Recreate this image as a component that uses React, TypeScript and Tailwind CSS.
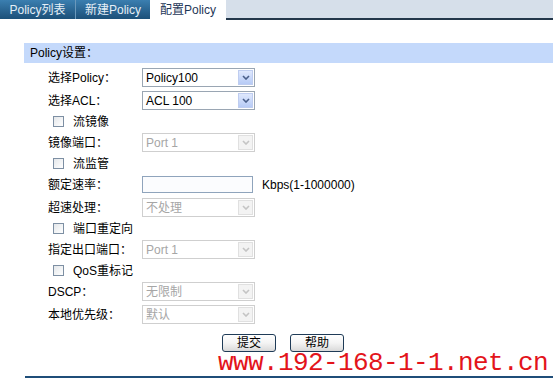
import React from "react";

const font = { fontFamily: '"Liberation Sans", Arial, "Noto Sans CJK SC", sans-serif' };

function Chevron({ disabled }: { disabled?: boolean }) {
  return (
    <svg width="8" height="5" viewBox="0 0 8 5">
      <path d="M1 1 L4 4 L7 1" fill="none" stroke={disabled ? "#c4c4c4" : "#4a5f8a"} strokeWidth="1.6" />
    </svg>
  );
}

function Select({ value, disabled }: { value: string; disabled?: boolean }) {
  return (
    <div
      className={`flex items-stretch w-[113px] h-[19px] border bg-white ${
        disabled ? "border-[#cfcfcf] text-[#a6a6a6]" : "border-[#9aa6b3] text-black"
      }`}
    >
      <div className="flex-1 flex items-center pl-[3px] text-[12px] leading-none">{value}</div>
      <div
        className={`m-[1px] w-[15px] flex items-center justify-center border ${
          disabled
            ? "bg-[#f3f3f3] border-[#e0e0e0]"
            : "bg-gradient-to-b from-[#dfe8fd] to-[#b7cbf6] border-[#bfcdf0]"
        }`}
      >
        <Chevron disabled={disabled} />
      </div>
    </div>
  );
}

function Label({ children }: { children: React.ReactNode }) {
  return <div className="w-[94px] pl-0 text-[12px] text-black">{children}</div>;
}

function SelectRow({ label, value, disabled }: { label: string; value: string; disabled?: boolean }) {
  return (
    <div className="h-[23px] flex items-center pl-[48px]">
      <Label>{label}</Label>
      <Select value={value} disabled={disabled} />
    </div>
  );
}

function CheckRow({ label }: { label: string }) {
  return (
    <div className="h-[19px] flex items-center pl-[53px]">
      <div className="w-[11px] h-[11px] border border-[#7d8fa3] bg-gradient-to-br from-[#e4e7ea] to-white" />
      <div className="ml-[9px] text-[12px] text-black">{label}</div>
    </div>
  );
}

function Button({ children }: { children: React.ReactNode }) {
  return (
    <div className="w-[54px] h-[18px] rounded-[3px] border border-[#1f3b57] bg-gradient-to-b from-white via-[#f4f4f4] to-[#d9d9d9] flex items-center justify-center text-[12px] leading-none text-black">
      {children}
    </div>
  );
}

export default function App() {
  return (
    <div className="relative w-[553px] h-[378px] overflow-hidden bg-white" style={font}>
      {/* tab bar */}
      <div className="flex h-[20px]">
        <div className="w-[76px] h-[19px] bg-gradient-to-b from-[#3b7fb0] to-[#1c5079] border-r border-[#6a98bb] flex items-center justify-center text-[12px] text-[#e6eff7]">
          Policy列表
        </div>
        <div className="w-[74px] h-[19px] bg-gradient-to-b from-[#3b7fb0] to-[#1c5079] flex items-center justify-center text-[12px] text-[#e6eff7]">
          新建Policy
        </div>
        <div className="w-[76px] h-[20px] bg-white flex items-center justify-center pb-[1px] text-[12px] text-[#1d3657]">
          配置Policy
        </div>
        <div className="flex-1 h-[20px] bg-[#d6dfea] border-b-2 border-[#23374b]" />
      </div>

      {/* section header */}
      <div className="mt-[23px] ml-[24px] h-[20px] bg-[#c4d9fb] flex items-center pl-[6px] text-[12px] text-black">
        Policy设置：
      </div>

      <div className="mt-[3px] flex flex-col">
        <SelectRow label="选择Policy：" value="Policy100" />
        <SelectRow label="选择ACL：" value="ACL 100" />
        <CheckRow label="流镜像" />
        <SelectRow label="镜像端口：" value="Port 1" disabled />
        <CheckRow label="流监管" />
        <div className="h-[23px] flex items-center pl-[48px]">
          <Label>额定速率：</Label>
          <div className="w-[111px] h-[17px] border border-[#8fa4bc] bg-[#fbfcfe]" />
          <div className="ml-[9px] text-[12px] text-black">Kbps(1-1000000)</div>
        </div>
        <SelectRow label="超速处理：" value="不处理" disabled />
        <CheckRow label="端口重定向" />
        <SelectRow label="指定出口端口：" value="Port 1" disabled />
        <CheckRow label="QoS重标记" />
        <SelectRow label="DSCP：" value="无限制" disabled />
        <SelectRow label="本地优先级：" value="默认" disabled />
      </div>

      <div className="mt-[8px] ml-[222px] flex gap-[14px]">
        <Button>提交</Button>
        <Button>帮助</Button>
      </div>

      <div className="mt-[24px] ml-[25px] h-[2px] bg-[#1f4e79]" />

      {/* watermark overlay */}
      <div
        className="absolute left-[218px] top-[354px] text-[26px] leading-[18px] tracking-[-0.6px] text-[#e3141b] whitespace-nowrap"
        style={{ fontFamily: '"Liberation Mono", "Courier New", monospace' }}
      >
        www.192-168-1-1.net.cn
      </div>
    </div>
  );
}
